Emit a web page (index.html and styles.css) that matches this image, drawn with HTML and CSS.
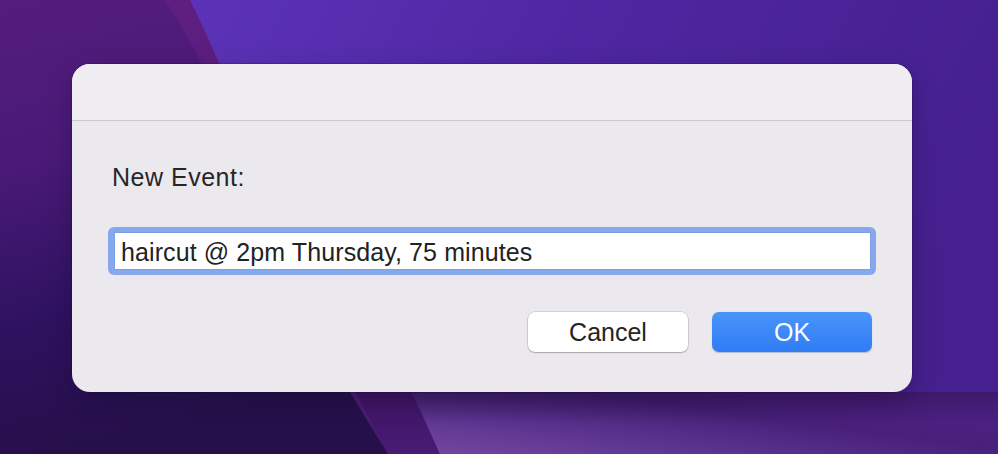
FILE: index.html
```html
<!DOCTYPE html>
<html lang="en">
<head>
<meta charset="utf-8">
<title>New Event</title>
<link rel="stylesheet" href="styles.css">
</head>
<body>
<div class="desktop">
  <svg class="wallpaper" width="998" height="454" viewBox="0 0 998 454" aria-hidden="true">
    <defs>
      <linearGradient id="base" x1="0" y1="0" x2="1" y2="1">
        <stop offset="0" stop-color="#4f26a6"/>
        <stop offset="0.5" stop-color="#48218f"/>
        <stop offset="1" stop-color="#4a1f86"/>
      </linearGradient>
      <linearGradient id="violet" x1="0" y1="0" x2="1" y2="0.3">
        <stop offset="0" stop-color="#5c33b8"/>
        <stop offset="0.45" stop-color="#4f27a2"/>
        <stop offset="1" stop-color="#45208e"/>
      </linearGradient>
      <linearGradient id="leftcol" x1="0" y1="0" x2="0.2" y2="1">
        <stop offset="0" stop-color="#541d7d"/>
        <stop offset="0.35" stop-color="#4a1a78"/>
        <stop offset="0.7" stop-color="#2e1260"/>
        <stop offset="1" stop-color="#261049"/>
      </linearGradient>
      <linearGradient id="band" x1="0" y1="0" x2="0" y2="1">
        <stop offset="0" stop-color="#5e1f80"/>
        <stop offset="1" stop-color="#4c1a74"/>
      </linearGradient>
      <linearGradient id="bottomband" x1="0" y1="0" x2="0" y2="1">
        <stop offset="0" stop-color="#3c1561"/>
        <stop offset="1" stop-color="#4a1b74"/>
      </linearGradient>
      <linearGradient id="light" x1="0" y1="1" x2="1" y2="0.2">
        <stop offset="0" stop-color="#76489f"/>
        <stop offset="0.35" stop-color="#5a338f"/>
        <stop offset="0.65" stop-color="#48207a"/>
        <stop offset="1" stop-color="#4d2188"/>
      </linearGradient>
      <linearGradient id="shade" x1="0" y1="0" x2="0" y2="1">
        <stop offset="0" stop-color="#2a1046" stop-opacity="0.45"/>
        <stop offset="1" stop-color="#2a1046" stop-opacity="0"/>
      </linearGradient>
    </defs>
    <rect width="998" height="454" fill="url(#base)"/>
    <path d="M190 0 L998 0 L998 454 L600 454 Q420 300 215 60 Z" fill="url(#violet)"/>
    <path d="M0 0 L190 0 Q205 30 222 70 L360 392 L395 454 L0 454 Z" fill="url(#band)"/>
    <path d="M0 0 L165 0 Q185 30 205 70 L350 392 L388 454 L0 454 Z" fill="url(#leftcol)"/>
    <path d="M355 392 L412 392 L440 454 L388 454 Z" fill="url(#bottomband)"/>
    <path d="M412 392 L998 392 L998 454 L440 454 Z" fill="url(#light)"/>
    <path d="M412 392 L998 392 L998 424 L426 424 Z" fill="url(#shade)"/>
  </svg>

  <div class="dialog">
    <div class="titlebar"></div>
    <div class="content">
      <div class="label">New Event:</div>
      <div class="field">
        <input class="field-input" type="text" value="haircut @ 2pm Thursday, 75 minutes">
      </div>
      <div class="actions">
        <button class="btn btn-cancel" type="button">Cancel</button>
        <button class="btn btn-ok" type="button">OK</button>
      </div>
    </div>
  </div>
</div>
</body>
</html>
```

FILE: styles.css
```css
* {
  box-sizing: border-box;
}

html, body {
  margin: 0;
  padding: 0;
  width: 998px;
  height: 454px;
  overflow: hidden;
  font-family: "Liberation Sans", Arial, sans-serif;
}

.desktop {
  position: relative;
  width: 998px;
  height: 454px;
  padding: 64px 86px 62px 72px;
  display: flex;
  align-items: flex-start;
}

.wallpaper {
  position: absolute;
  left: 0;
  top: 0;
  z-index: 0;
}

.dialog {
  position: relative;
  z-index: 1;
  width: 840px;
  height: 328px;
  border-radius: 18px;
  background: #ebe9ee;
  overflow: hidden;
  display: flex;
  flex-direction: column;
  box-shadow: 0 0 0 0.5px rgba(20, 0, 40, 0.35), 0 8px 24px rgba(10, 0, 30, 0.25);
}

.titlebar {
  height: 57px;
  flex: none;
  background: #efedf2;
  border-bottom: 1px solid #cbc9ce;
}

.content {
  flex: 1;
  display: flex;
  flex-direction: column;
  padding: 41px 36px 40px 36px;
}

.label {
  font-size: 25px;
  line-height: 30px;
  height: 30px;
  color: #262626;
  padding-left: 4px;
  letter-spacing: 0.5px;
  margin-bottom: 35px;
}

.field {
  height: 48px;
  border-radius: 6px;
  background: #87a8ec;
  padding: 5px 5px 5px 6px;
  margin-bottom: 37px;
}

.field-input {
  display: block;
  width: 100%;
  height: 38px;
  margin: 0;
  border: 1px solid #7e9fe0;
  background: #ffffff;
  font-family: "Liberation Sans", Arial, sans-serif;
  font-size: 25px;
  line-height: 36px;
  letter-spacing: 0.1px;
  color: #222222;
  padding: 2px 0 0 6px;
  outline: none;
  border-radius: 0;
}

.actions {
  display: flex;
  justify-content: flex-end;
  gap: 24px;
  padding-right: 4px;
}

.btn {
  width: 160px;
  height: 40px;
  margin: 0;
  padding: 0;
  border-radius: 7px;
  font-family: "Liberation Sans", Arial, sans-serif;
  font-size: 25px;
  line-height: 40px;
  cursor: default;
}

.btn-cancel {
  background: #ffffff;
  color: #242424;
  border: none;
  box-shadow: 0 0 0 0.5px rgba(0, 0, 0, 0.18), 0 1px 1.5px rgba(0, 0, 0, 0.22);
}

.btn-ok {
  background: linear-gradient(#4a95f9, #2f7cf6);
  color: #ffffff;
  border: none;
  box-shadow: 0 0.5px 1px rgba(0, 40, 120, 0.25);
}
```
